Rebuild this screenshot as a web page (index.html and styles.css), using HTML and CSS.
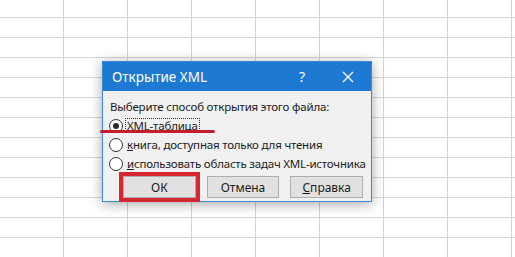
FILE: index.html
```html
<!DOCTYPE html>
<html lang="ru">
<head>
  <meta charset="UTF-8" />
  <title>Открытие XML</title>
  <link rel="stylesheet" href="styles.css">
</head>
<body>

  <div class="dialog">
    <div class="title-bar">
      <span class="title">Открытие XML</span>
      <span class="help">?</span>
      <svg class="close" width="12" height="12" viewBox="0 0 12 12">
        <path d="M1 1 L11 11 M11 1 L1 11" stroke="#fff" stroke-width="1.3" fill="none"/>
      </svg>
    </div>

    <div class="dialog-body">
      <div class="prompt">Выберите способ открытия этого файла:</div>

      <label class="option">
        <span class="radio checked"></span>
        <span class="option-text focused">XML-<u>т</u>аблица</span>
      </label>
      <label class="option">
        <span class="radio"></span>
        <span class="option-text"><u>к</u>нига, доступная только для чтения</span>
      </label>
      <label class="option">
        <span class="radio"></span>
        <span class="option-text"><u>и</u>спользовать область задач XML-источника</span>
      </label>

      <div class="buttons">
        <button class="btn btn-ok">ОК</button>
        <button class="btn">Отмена</button>
        <button class="btn"><u>С</u>правка</button>
      </div>
    </div>
  </div>

  <!-- пометка красным поверх диалога -->
  <div class="marker"></div>

</body>
</html>
```

FILE: styles.css
```css
body {
  margin: 0;
  width: 515px;
  height: 257px;
  overflow: hidden;
  position: relative;
  background-color: #fff;
  background-image:
    linear-gradient(to right, #d2d2d2 1px, transparent 1px),
    linear-gradient(to bottom, #d6d6d6 1px, transparent 1px);
  background-size: 64px 20px;
  background-position: 63px 17px;
  font-family: "Noto Sans", "Open Sans", sans-serif;
  color: #1b1b1b;
}

.dialog {
  position: absolute;
  left: 102px;
  top: 61px;
  width: 270px;
  height: 141px;
  box-sizing: border-box;
  border: 1px solid #3a88d6;
  background-color: #f0f0f0;
  box-shadow: 0 2px 12px rgba(0, 0, 0, 0.35);
}

.title-bar {
  height: 29px;
  background-color: #1d79d2;
  color: #fff;
  display: flex;
  align-items: center;
  padding-left: 9px;
  padding-right: 17px;
  font-size: 13.5px;
}

.title {
  flex: 1;
}

.help {
  font-size: 14px;
  margin-right: 37px;
}

.close {
  display: block;
}

.dialog-body {
  padding: 6px 8px 0 7px;
  font-size: 11.5px;
  letter-spacing: -0.2px;
  white-space: nowrap;
}

.prompt {
  height: 19px;
  line-height: 19px;
}

.option {
  display: flex;
  align-items: center;
  gap: 3px;
  height: 19px;
  margin-left: -1px;
}

.radio {
  flex-shrink: 0;
  width: 12px;
  height: 12px;
  border: 1px solid #333;
  border-radius: 50%;
  background-color: #fff;
  display: flex;
  align-items: center;
  justify-content: center;
}

.radio.checked::after {
  content: "";
  width: 6px;
  height: 6px;
  border-radius: 50%;
  background-color: #2a2a2a;
}

.option-text {
  line-height: 13px;
  padding: 0 1px;
}

.option-text.focused {
  outline: 1px dotted #333;
}

.buttons {
  display: flex;
  gap: 11px;
  margin-top: 3px;
  padding-left: 13px;
}

.btn {
  width: 73px;
  height: 22px;
  background-color: #e1e1e1;
  border: 1px solid #adadad;
  font-family: "Noto Sans", "Open Sans", sans-serif;
  font-size: 12px;
  color: #1b1b1b;
  padding: 0;
}

.btn-ok {
  outline: 4px solid #d82630;
}

.marker {
  position: absolute;
  left: 100px;
  top: 130px;
  width: 115px;
  height: 3px;
  border-radius: 2px;
  background-color: #c41e2a;
}
```
